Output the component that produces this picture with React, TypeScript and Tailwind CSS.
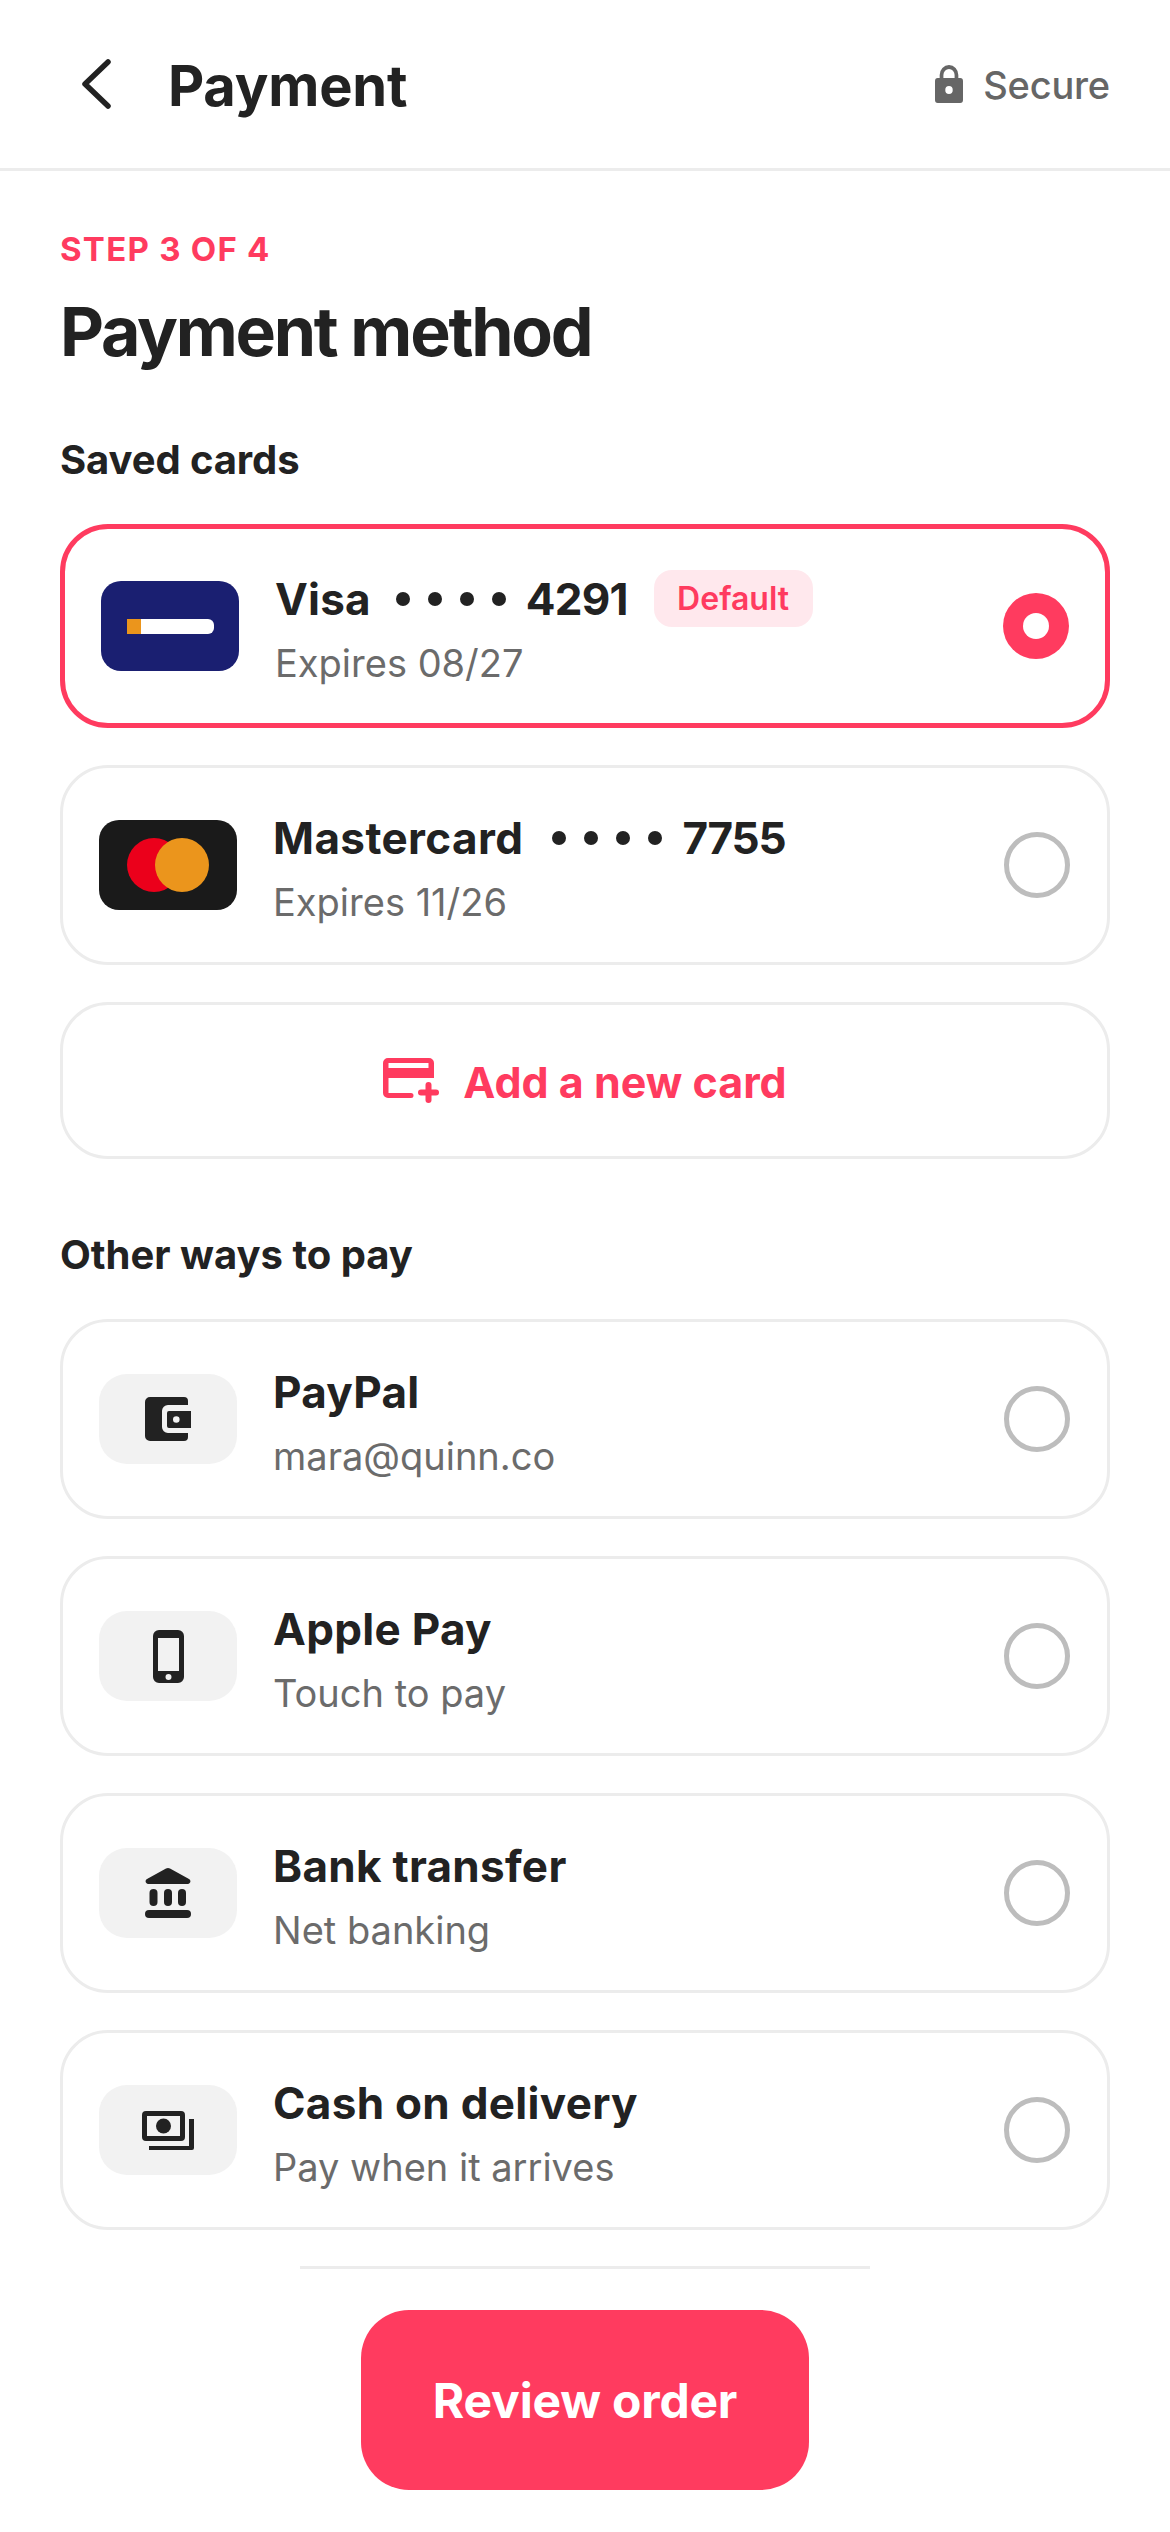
import React from 'react';

const WalletIcon = () => (
  <svg width="46" height="44" viewBox="0 0 46 44" fill="#222222">
    <path d="M5 0h34a4 4 0 0 1 4 4v4H23a6 6 0 0 0-6 6v16a6 6 0 0 0 6 6h20v4a4 4 0 0 1-4 4H5a5 5 0 0 1-5-5V5a5 5 0 0 1 5-5z" />
    <path fillRule="evenodd" d="M24 14h22v17H24a2 2 0 0 1-2-2V16a2 2 0 0 1 2-2zm7.300 5.200a3.300 3.300 0 1 0 0 6.600 3.300 3.300 0 0 0 0-6.600z" />
  </svg>
);

const PhoneIcon = () => (
  <svg width="31" height="53" viewBox="0 0 31 53" fill="#222222">
    <path fillRule="evenodd" d="M6 0h19a6 6 0 0 1 6 6v41a6 6 0 0 1-6 6H6a6 6 0 0 1-6-6V6a6 6 0 0 1 6-6zM5 8v33h21V8H5zm10.500 36a3 3 0 1 0 0 6 3 3 0 0 0 0-6z" />
  </svg>
);

const BankIcon = () => (
  <svg width="46" height="50" viewBox="0 0 46 50" fill="#222222">
    <path d="M21 .6a4 4 0 0 1 4 0l19 10.400c2.500 1.400 1.500 5-1.300 5H3.300C.5 16-.5 12.400 2 11L21 .6z" />
    <rect x="4.500" y="21" width="8" height="17" rx="4" />
    <rect x="19" y="21" width="8" height="17" rx="4" />
    <rect x="33" y="21" width="8" height="17" rx="4" />
    <rect x="0" y="42" width="46" height="8" rx="4" />
  </svg>
);

const CashIcon = () => (
  <svg width="52" height="39" viewBox="0 0 52 39" fill="#222222">
    <path fillRule="evenodd" d="M4 0h35a4 4 0 0 1 4 4v22a4 4 0 0 1-4 4H4a4 4 0 0 1-4-4V4a4 4 0 0 1 4-4zm1 5v20h33V5H5z" />
    <circle cx="21.500" cy="15" r="7.500" />
    <path d="M47 8h5v29a2 2 0 0 1-2 2H7v-4h40V8z" />
  </svg>
);

const AddCardIcon = () => (
  <svg width="56" height="45" viewBox="0 0 56 45" fill="#ff3b5f">
    <path fillRule="evenodd" d="M5 0h41a5 5 0 0 1 5 5v15H5.500v15H28a2.500 2.500 0 0 1 0 5H5a5 5 0 0 1-5-5V5a5 5 0 0 1 5-5zm.5 5v5h40V5h-40z" />
    <rect x="35" y="31.500" width="21" height="6" rx="3" />
    <rect x="42.500" y="24" width="6" height="21" rx="3" />
  </svg>
);

const Radio = ({ selected }: { selected?: boolean }) =>
  selected ? (
    <div className="w-[66px] h-[66px] shrink-0 rounded-full bg-[#ff3b5f] flex items-center justify-center">
      <div className="w-[26px] h-[26px] rounded-full bg-white" />
    </div>
  ) : (
    <div className="w-[66px] h-[66px] shrink-0 rounded-full border-[5px] border-[#bdbdbd]" />
  );

const Dots = ({ className }: { className: string }) => (
  <span className={`${className} flex items-center gap-[18px]`}>
    <span className="w-[14px] h-[14px] rounded-full bg-[#222222]" />
    <span className="w-[14px] h-[14px] rounded-full bg-[#222222]" />
    <span className="w-[14px] h-[14px] rounded-full bg-[#222222]" />
    <span className="w-[14px] h-[14px] rounded-full bg-[#222222]" />
  </span>
);

interface OptionProps {
  title: string;
  sub: string;
  icon: React.ReactNode;
}

const Option = ({ title, sub, icon }: OptionProps) => (
  <div className="h-[200px] rounded-[48px] border-[3px] border-[#ececec] pl-[36px] pr-[37px] flex items-center">
    <div className="w-[138px] h-[90px] rounded-[28px] bg-[#f2f2f2] flex items-center justify-center">{icon}</div>
    <div className="ml-[36px] flex-1 pt-[6px]">
      <div className="text-[44px] leading-[52px] font-bold tracking-[0.3px] text-[#222222]">{title}</div>
      <div className="mt-[15px] text-[38px] leading-[46px] text-[#6b6b6b]">{sub}</div>
    </div>
    <Radio />
  </div>
);

const others: OptionProps[] = [
  { title: 'PayPal', sub: 'mara@quinn.co', icon: <WalletIcon /> },
  { title: 'Apple Pay', sub: 'Touch to pay', icon: <PhoneIcon /> },
  { title: 'Bank transfer', sub: 'Net banking', icon: <BankIcon /> },
  { title: 'Cash on delivery', sub: 'Pay when it arrives', icon: <CashIcon /> },
];

export default function App() {
  return (
    <div className="w-[1170px] h-[2532px] bg-white flex flex-col font-['Inter',sans-serif]">
      {/* top bar */}
      <div className="h-[171px] shrink-0 border-b-[3px] border-[#ececec] pl-[80px] pr-[60px] flex items-center">
        <svg width="32" height="50" viewBox="0 0 32 50" fill="none" stroke="#222222" strokeWidth="5.500" strokeLinecap="round" strokeLinejoin="round">
          <path d="M28 3 5 25l23 22" />
        </svg>
        <div className="ml-[56px] mt-[3px] flex-1 text-[56px] font-bold tracking-[-0.2px] text-[#222222]">Payment</div>
        <svg width="28" height="38" viewBox="0 0 30 38" fill="#666666" preserveAspectRatio="none">
          <path fillRule="evenodd" d="M15 0a10 10 0 0 1 10 10v3h2a3 3 0 0 1 3 3v19a3 3 0 0 1-3 3H3a3 3 0 0 1-3-3V16a3 3 0 0 1 3-3h2v-3A10 10 0 0 1 15 0zm0 4a6 6 0 0 0-6 6v3h12v-3a6 6 0 0 0-6-6zm0 17a4 4 0 1 0 0 8 4 4 0 0 0 0-8z" />
        </svg>
        <div className="ml-[20px] mt-[3px] text-[38px] font-medium tracking-[-0.2px] text-[#666666]">Secure</div>
      </div>

      <div className="flex-1 px-[60px]">
        <div className="mt-[57px] text-[33px] leading-[42px] font-bold tracking-[1.25px] text-[#ff3b5f]">STEP 3 OF 4</div>
        <h1 className="mt-[19px] text-[68px] leading-[84px] font-bold tracking-[-2.25px] text-[#222222]">Payment method</h1>
        <h2 className="mt-[63px] text-[40px] leading-[48px] font-bold tracking-[-0.1px] text-[#222222]">Saved cards</h2>

        <div className="mt-[40px] flex flex-col gap-[37px]">
          <div className="h-[204px] rounded-[48px] border-[5px] border-[#ff3b5f] pl-[36px] pr-[36px] flex items-center">
            <div className="w-[138px] h-[90px] rounded-[20px] bg-[#1a1f71] flex items-center justify-center">
              <div className="w-[87px] h-[15px] rounded-r-[6px] bg-white overflow-hidden">
                <div className="w-[14px] h-full bg-[#eb951c]" />
              </div>
            </div>
            <div className="ml-[36px] flex-1 pt-[6px]">
              <div className="flex items-center h-[52px] text-[44px] font-bold tracking-[0.2px] text-[#222222]">
                <span>Visa</span>
                <Dots className="ml-[25px] mr-[20px]" />
                <span className="tracking-[-0.8px]">4291</span>
                <span className="ml-[26px] h-[57px] w-[159px] rounded-[18px] bg-[#ffe8ed] flex items-center justify-center text-[32px] font-semibold tracking-normal text-[#ff3b5f]">Default</span>
              </div>
              <div className="mt-[15px] text-[38px] leading-[46px] text-[#6b6b6b]">Expires 08/27</div>
            </div>
            <Radio selected />
          </div>

          <div className="h-[200px] rounded-[48px] border-[3px] border-[#ececec] pl-[36px] pr-[37px] flex items-center">
            <div className="w-[138px] h-[90px] rounded-[20px] bg-[#1a1a1a] flex items-center justify-center">
              <div className="w-[54px] h-[54px] rounded-full bg-[#eb001b]" />
              <div className="w-[54px] h-[54px] rounded-full bg-[#eb951c] ml-[-26px]" />
            </div>
            <div className="ml-[36px] flex-1 pt-[6px]">
              <div className="flex items-center h-[52px] text-[44px] font-bold tracking-[0.4px] text-[#222222]">
                <span>Mastercard</span>
                <Dots className="ml-[29px] mr-[20px]" />
                <span className="tracking-[-1.2px]">7755</span>
              </div>
              <div className="mt-[15px] text-[38px] leading-[46px] text-[#6b6b6b]">Expires 11/26</div>
            </div>
            <Radio />
          </div>

          <div className="h-[157px] rounded-[48px] border-[3px] border-[#ececec] flex items-center justify-center gap-[24px]">
            <AddCardIcon />
            <span className="mt-[3px] text-[43px] font-bold text-[#ff3b5f]">Add a new card</span>
          </div>
        </div>

        <h2 className="mt-[72px] text-[40px] leading-[48px] font-bold text-[#222222]">Other ways to pay</h2>
        <div className="mt-[40px] flex flex-col gap-[37px]">
          {others.map((o) => (
            <Option key={o.title} {...o} />
          ))}
        </div>
      </div>

      {/* bottom action */}
      <div className="h-[266px] shrink-0 flex flex-col items-center">
        <div className="w-[570px] h-[3px] bg-[#ececec]" />
        <button className="mt-[41px] w-[448px] h-[180px] pt-[1px] rounded-[48px] bg-[#ff3b5f] text-white text-[48px] font-bold tracking-[-0.2px]">Review order</button>
      </div>
    </div>
  );
}
